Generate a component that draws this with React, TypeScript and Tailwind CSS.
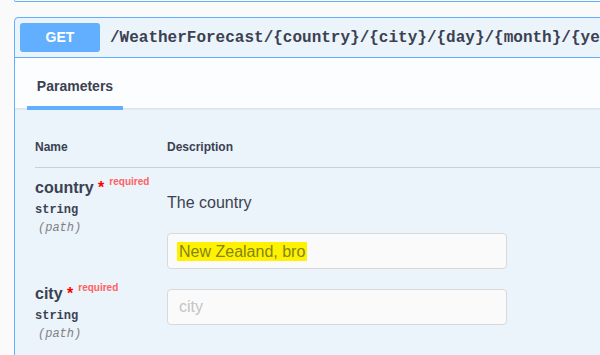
import React from 'react';

interface Param {
  name: string;
  type: string;
  location: string;
  description?: string;
  value?: string;
  placeholder: string;
}

const params: Param[] = [
  { name: 'country', type: 'string', location: '(path)', description: 'The country', value: 'New Zealand, bro', placeholder: 'country' },
  { name: 'city', type: 'string', location: '(path)', placeholder: 'city' },
];

function ParamRow({ p }: { p: Param }) {
  return (
    <div className="flex pt-[10px] pb-[5px]">
      {/* Name column */}
      <div className="w-[132px] shrink-0">
        <div className="text-[16px] leading-[20px] font-bold whitespace-nowrap">
          {p.name}
          <span className="text-[#ff0000]">&nbsp;*</span>
          <span className="relative -top-[8px] pl-[5px] text-[10px] font-bold text-[#ff6161]">required</span>
        </div>
        <div className="mt-[2px] font-['Liberation_Mono',monospace] text-[12px] leading-[16px] font-bold">{p.type}</div>
        <div className="mt-[2px] pl-[3px] font-['Liberation_Mono',monospace] text-[12px] leading-[16px] italic text-[#808080]">
          {p.location}
        </div>
      </div>

      {/* Description column */}
      <div className="flex-1">
        {p.description && (
          <p className="mt-[16px] text-[16px] leading-[18px]">{p.description}</p>
        )}
        <div
          className={`${p.description ? 'mt-[21px]' : 'mt-[5px]'} w-[340px] h-[36px] flex items-center px-[9px] border border-[#d9d9d9] rounded-[4px] bg-[#fafafa] text-[16px]`}
        >
          {p.value ? (
            <span className="px-[2px] py-[1px] bg-[#fff200] text-[#858319] leading-[17px]">{p.value}</span>
          ) : (
            <span className="px-[2px] text-[#c4c4c4]">{p.placeholder}</span>
          )}
        </div>
      </div>
    </div>
  );
}

export default function App() {
  return (
    <div className="w-[600px] h-[355px] overflow-hidden bg-[#fafafa] font-['Liberation_Sans',Arial,sans-serif] text-[#3b4151]">
      <div className="w-[900px] pl-[14px]">
        {/* bottom of previous operation block */}
        <div className="h-[2px] border-x border-b border-[#61affe] rounded-b-[4px]" />

        <div className="mt-[15px] border border-[#61affe] rounded-[4px] bg-[#ebf3fb] overflow-hidden">
          {/* Summary */}
          <div className="flex items-center p-[5px] border-b border-[#61affe]">
            <span className="w-[80px] h-[29px] flex items-center justify-center rounded-[3px] bg-[#61affe] text-white text-[14px] font-bold">
              GET
            </span>
            <span className="ml-[10px] font-['Liberation_Mono',monospace] text-[16px] font-bold whitespace-nowrap">
              /WeatherForecast/{'{country}'}/{'{city}'}/{'{day}'}/{'{month}'}/{'{year}'}
            </span>
          </div>

          {/* Section header with tab */}
          <div className="relative h-[50px] px-[20px] pt-[16px] bg-white/80 shadow-[0_1px_2px_rgba(0,0,0,0.1)]">
            <div className="inline-flex flex-col items-center">
              <h4 className="text-[14px] leading-[17px] font-bold">Parameters</h4>
              <div className="mt-[11px] h-[4px] w-[96px] -mx-[8px] bg-[#61affe]" />
            </div>
          </div>

          {/* Parameters table */}
          <div className="px-[20px] pt-[20px] pb-[20px]">
            <div className="flex py-[12px] text-[12px] leading-[15px] font-bold border-b border-[#3b4151]/20">
              <div className="w-[132px]">Name</div>
              <div>Description</div>
            </div>
            {params.map((p) => (
              <ParamRow key={p.name} p={p} />
            ))}
          </div>
        </div>
      </div>
    </div>
  );
}
